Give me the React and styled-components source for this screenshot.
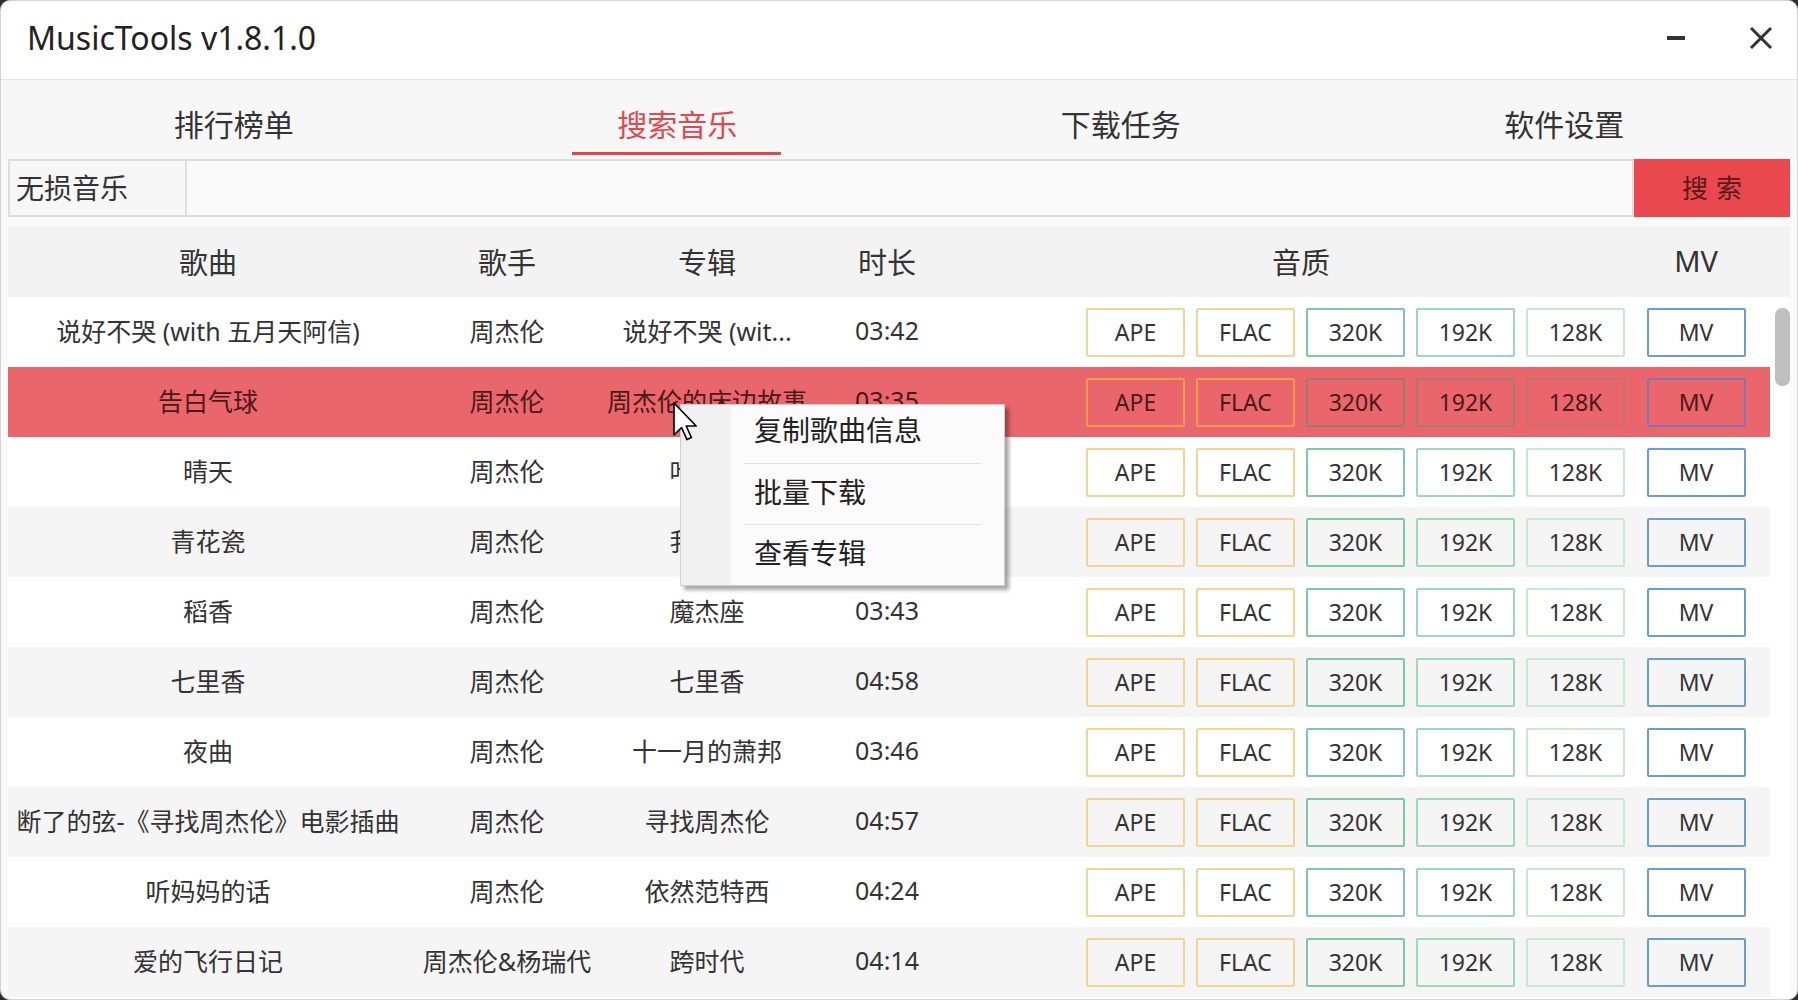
import React from 'react';
import styled, { createGlobalStyle, css } from 'styled-components';

const GlobalStyle = createGlobalStyle`
  html, body {
    margin: 0;
    padding: 0;
    background: #2e2e2e;
    overflow: hidden;
  }
  body {
    font-family: "Noto Sans", "Noto Sans CJK SC", sans-serif;
    color: #333;
  }
`

const Window = styled.div`
  position: relative;
  width: 1798px;
  height: 1000px;
  box-sizing: border-box;
  background: #fafafa;
  border: 1px solid #d4d4d4;
  border-radius: 10px;
  overflow: hidden;
  display: flex;
  flex-direction: column;
`
const TitleBar = styled.div`
  height: 78px;
  flex: none;
  background: #fff;
  border-bottom: 1px solid #e3e3e3;
  display: flex;
  align-items: center;
  justify-content: space-between;
  padding: 0 24px 0 26px;
`
const Title = styled.div`
  font-size: 32px;
  color: #222;
  line-height: 1;
  margin-top: -4px;
`
const WinButtons = styled.div`
  display: flex;
  align-items: center;
  gap: 64px;
  margin-top: -4px;
`
const TabBar = styled.div`
  height: 79px;
  flex: none;
  background: #f7f7f7;
  display: grid;
  grid-template-columns: repeat(4, 1fr);
  padding: 0 11px;
`
const Tab = styled.div`
  display: flex;
  justify-content: center;
  align-items: center;
  font-size: 30px;
  padding-top: 6px;
  color: ${p => (p.$active ? '#e2474f' : '#333')};
  position: relative;
  ${p => p.$active && css`
    &::after {
      content: '';
      position: absolute;
      bottom: 4px;
      left: 50%;
      width: 209px;
      margin-left: -105px;
      height: 3px;
      background: #e2474f;
    }
  `}
`
const Content = styled.div`
  flex: 1;
  padding: 0 7px 0 7px;
  display: flex;
  flex-direction: column;
  min-height: 0;
`
const SearchRow = styled.div`
  height: 58px;
  flex: none;
  display: flex;
`
const SourceBox = styled.div`
  width: 179px;
  box-sizing: border-box;
  border: 2px solid #dedede;
  background: #f7f7f7;
  display: flex;
  align-items: center;
  padding-left: 6px;
  padding-bottom: 3px;
  font-size: 28px;
  color: #333;
`
const SearchInput = styled.div`
  flex: 1;
  box-sizing: border-box;
  border: 2px solid #dedede;
  border-left: none;
  background: #fafafa;
`
const SearchButton = styled.div`
  width: 156px;
  background: #e8484e;
  display: flex;
  align-items: center;
  justify-content: center;
  font-size: 26px;
  letter-spacing: 8px;
  color: #5a1a1c;
  padding-left: 8px;
  padding-bottom: 3px;
  box-sizing: border-box;
`
const cols = '400px 198px 202px 158px 670px 120px 1fr'

const Header = styled.div`
  margin-top: 9px;
  height: 71px;
  flex: none;
  display: grid;
  grid-template-columns: ${cols};
  background: #f3f3f3;
  align-items: center;
  font-size: 29px;
  color: #333;
  & > div {
    text-align: center;
    padding-bottom: 2px;
  }
`
const Body = styled.div`
  flex: 1;
  display: flex;
  min-height: 0;
  overflow: hidden;
  background: #fff;
`
const Rows = styled.div`
  width: 1762px;
  flex: none;
`
const Row = styled.div`
  height: 70px;
  display: grid;
  grid-template-columns: ${cols};
  align-items: center;
  font-size: 25px;
  background: ${p => (p.$selected ? '#e9676c' : p.$odd ? '#f5f5f5' : '#fff')};
  color: ${p => (p.$selected ? '#4d1719' : '#333')};
`
const Cell = styled.div`
  text-align: center;
  white-space: nowrap;
  overflow: hidden;
  padding-bottom: 4px;
`
const Quality = styled.div`
  display: flex;
  justify-content: flex-end;
  gap: 11px;
  padding-right: 11px;
`
const MvCell = styled.div`
  display: flex;
  justify-content: center;
`
const borders = {
  ape: ['#f2d494', '#f29a4c'],
  flac: ['#f2d494', '#f29a4c'],
  q320: ['#7fc7a8', '#a07a6c'],
  q192: ['#9dd7bd', '#a67c70'],
  q128: ['#c8e8d6', '#c47170'],
  mv: ['#6b9bd9', '#8372b4'],
}
const QButton = styled.div`
  width: 99px;
  height: 49px;
  box-sizing: border-box;
  border: 2px solid ${p => borders[p.$kind][p.$selected ? 1 : 0]};
  border-radius: 2px;
  display: flex;
  align-items: center;
  justify-content: center;
  font-size: 23px;
`
const ScrollTrack = styled.div`
  flex: 1;
  position: relative;
  background: #fff;
`
const ScrollThumb = styled.div`
  position: absolute;
  top: 11px;
  right: 0;
  width: 15px;
  height: 78px;
  border-radius: 7px;
  background: #bfbfbf;
`
const Menu = styled.div`
  position: absolute;
  left: 679px;
  top: 403px;
  width: 325px;
  box-sizing: border-box;
  background: #fbfbfb;
  border: 1px solid #cfcfcf;
  box-shadow: 4px 4px 4px rgba(0, 0, 0, 0.35);
  display: flex;
`
const Gutter = styled.div`
  width: 50px;
  background: #f0f0f0;
`
const MenuItems = styled.div`
  flex: 1;
  padding: 0 23px 0 13px;
`
const MenuItem = styled.div`
  height: ${p => (p.$first ? '58px' : '61px')};
  display: flex;
  align-items: center;
  padding-left: 10px;
  padding-bottom: ${p => (p.$first ? '10px' : '6px')};
  box-sizing: border-box;
  font-size: 28px;
  color: #222;
  border-top: ${p => (p.$first ? 'none' : '1px solid #e2e2e2')};
`
const Cursor = styled.svg`
  position: absolute;
  left: 672px;
  top: 401px;
`

const songs = [
  ['说好不哭 (with 五月天阿信)', '周杰伦', '说好不哭 (wit...', '03:42'],
  ['告白气球', '周杰伦', '周杰伦的床边故事', '03:35'],
  ['晴天', '周杰伦', '叶惠美', '04:29'],
  ['青花瓷', '周杰伦', '我很忙', '03:59'],
  ['稻香', '周杰伦', '魔杰座', '03:43'],
  ['七里香', '周杰伦', '七里香', '04:58'],
  ['夜曲', '周杰伦', '十一月的萧邦', '03:46'],
  ['断了的弦-《寻找周杰伦》电影插曲', '周杰伦', '寻找周杰伦', '04:57'],
  ['听妈妈的话', '周杰伦', '依然范特西', '04:24'],
  ['爱的飞行日记', '周杰伦&杨瑞代', '跨时代', '04:14'],
]

const qualities = [
  ['ape', 'APE'],
  ['flac', 'FLAC'],
  ['q320', '320K'],
  ['q192', '192K'],
  ['q128', '128K'],
]

export default function App () {
  return (
    <Window>
      <GlobalStyle />
      <TitleBar>
        <Title>MusicTools v1.8.1.0</Title>
        <WinButtons>
          <svg width="18" height="6" viewBox="0 0 18 6">
            <rect x="0" y="1" width="18" height="4" fill="#333" />
          </svg>
          <svg width="24" height="24" viewBox="0 0 24 24">
            <path d="M2 2 L22 22 M22 2 L2 22" stroke="#333" strokeWidth="3" />
          </svg>
        </WinButtons>
      </TitleBar>
      <TabBar>
        <Tab>排行榜单</Tab>
        <Tab $active>搜索音乐</Tab>
        <Tab>下载任务</Tab>
        <Tab>软件设置</Tab>
      </TabBar>
      <Content>
        <SearchRow>
          <SourceBox>无损音乐</SourceBox>
          <SearchInput />
          <SearchButton>搜索</SearchButton>
        </SearchRow>
        <Header>
          <div>歌曲</div>
          <div>歌手</div>
          <div>专辑</div>
          <div>时长</div>
          <div>音质</div>
          <div>MV</div>
        </Header>
        <Body>
          <Rows>
            {songs.map((s, i) => {
              const sel = i === 1
              return (
                <Row key={i} $selected={sel} $odd={i % 2 === 1}>
                  <Cell>{s[0]}</Cell>
                  <Cell>{s[1]}</Cell>
                  <Cell>{s[2]}</Cell>
                  <Cell>{s[3]}</Cell>
                  <Quality>
                    {qualities.map(q => (
                      <QButton key={q[0]} $kind={q[0]} $selected={sel}>{q[1]}</QButton>
                    ))}
                  </Quality>
                  <MvCell>
                    <QButton $kind="mv" $selected={sel}>MV</QButton>
                  </MvCell>
                </Row>
              )
            })}
          </Rows>
          <ScrollTrack>
            <ScrollThumb />
          </ScrollTrack>
        </Body>
      </Content>
      <Menu>
        <Gutter />
        <MenuItems>
          <MenuItem $first>复制歌曲信息</MenuItem>
          <MenuItem>批量下载</MenuItem>
          <MenuItem>查看专辑</MenuItem>
        </MenuItems>
      </Menu>
      <Cursor width="26" height="40" viewBox="0 0 13 20">
        <path d="M0.5 0.5 L0.5 16.5 L4.3 12.8 L7 18.8 L9.2 17.8 L6.6 12 L11.6 12 Z" fill="#fff" stroke="#000" strokeWidth="0.8" strokeLinejoin="round" />
      </Cursor>
    </Window>
  );
}
